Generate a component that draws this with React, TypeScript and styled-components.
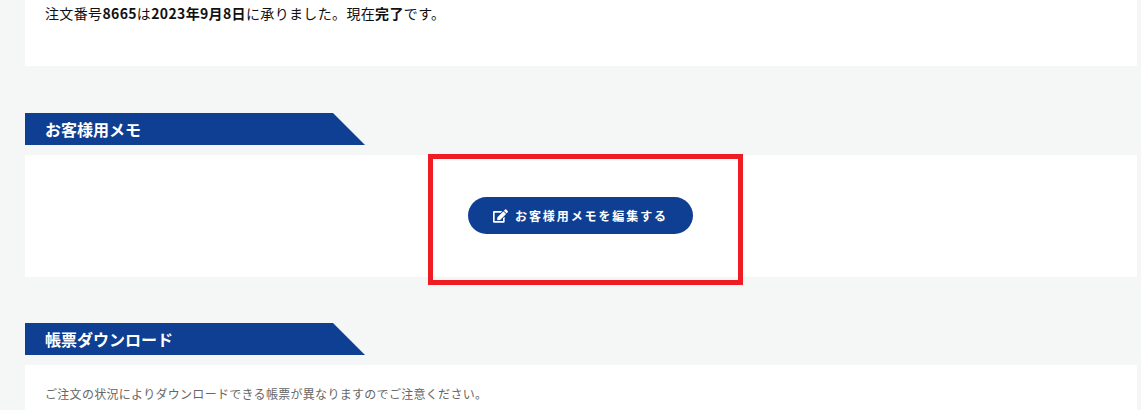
import React from 'react';
import styled, { createGlobalStyle } from 'styled-components';
import { FaEdit } from 'react-icons/fa';

const GlobalStyle = createGlobalStyle`
	html, body {
		margin: 0;
		padding: 0;
		background: #f5f7f7;
		font-family: 'Noto Sans CJK JP', 'Noto Sans', sans-serif;
		color: #111;
		overflow: hidden;
	}
`;

const Page = styled.div`
	position: relative;
	width: 1141px;
	height: 410px;
	box-sizing: border-box;
	padding: 0 4px 0 25px;
	overflow: hidden;
`;

const Card = styled.div<{ $height?: number }>`
	background: #fff;
	box-sizing: border-box;
	height: ${p => (p.$height ? `${p.$height}px` : 'auto')};
`;

const OrderCard = styled(Card)`
	padding: 0 20px;
`;

const OrderText = styled.p`
	margin: 0;
	font-size: 14px;
	line-height: 26px;
	letter-spacing: 0.35px;
	color: #111;

	b {
		font-weight: 700;
	}
`;

const Heading = styled.h2<{ $top: number }>`
	margin: ${p => p.$top}px 0 10px;
	width: 340px;
	height: 32px;
	box-sizing: border-box;
	padding-left: 20px;
	background: #0f3f92;
	clip-path: polygon(0 0, 308px 0, 100% 100%, 0 100%);
	color: #fff;
	font-size: 16px;
	font-weight: 700;
	line-height: 32px;
`;

const MemoCard = styled(Card)`
	display: flex;
	justify-content: center;
	align-items: flex-start;
	padding-top: 42px;
	padding-right: 0;
`;

const EditButton = styled.button`
	display: flex;
	align-items: center;
	justify-content: center;
	gap: 7px;
	width: 225px;
	height: 37px;
	margin-left: -1px;
	border: 0;
	border-radius: 19px;
	background: #0f3f92;
	color: #fff;
	font-family: inherit;
	font-size: 12px;
	font-weight: 700;
	letter-spacing: 1.9px;
	svg {
		width: 15px;
		height: 14px;
	}
`;

const Highlight = styled.div`
	position: absolute;
	left: 428px;
	top: 154px;
	width: 315px;
	height: 131px;
	box-sizing: border-box;
	border: 5px solid #f01c24;
	pointer-events: none;
`;

const DownloadCard = styled(Card)`
	padding: 16px 20px 0;
`;

const Note = styled.p`
	margin: 0;
	font-size: 12px;
	line-height: 26px;
	letter-spacing: 0.3px;
	color: #666;
`;

export default function App() {
	return (
		<Page>
			<GlobalStyle />
			<OrderCard $height={66}>
				<OrderText>
					注文番号<b>8665</b>は<b>2023年9月8日</b>に承りました。現在<b>完了</b>です。
				</OrderText>
			</OrderCard>
			<Heading $top={47}>お客様用メモ</Heading>
			<MemoCard $height={122}>
				<EditButton>
					<FaEdit />
					お客様用メモを編集する
				</EditButton>
			</MemoCard>
			<Heading $top={46}>帳票ダウンロード</Heading>
			<DownloadCard $height={60}>
				<Note>ご注文の状況によりダウンロードできる帳票が異なりますのでご注意ください。</Note>
			</DownloadCard>
			<Highlight />
		</Page>
	);
}
